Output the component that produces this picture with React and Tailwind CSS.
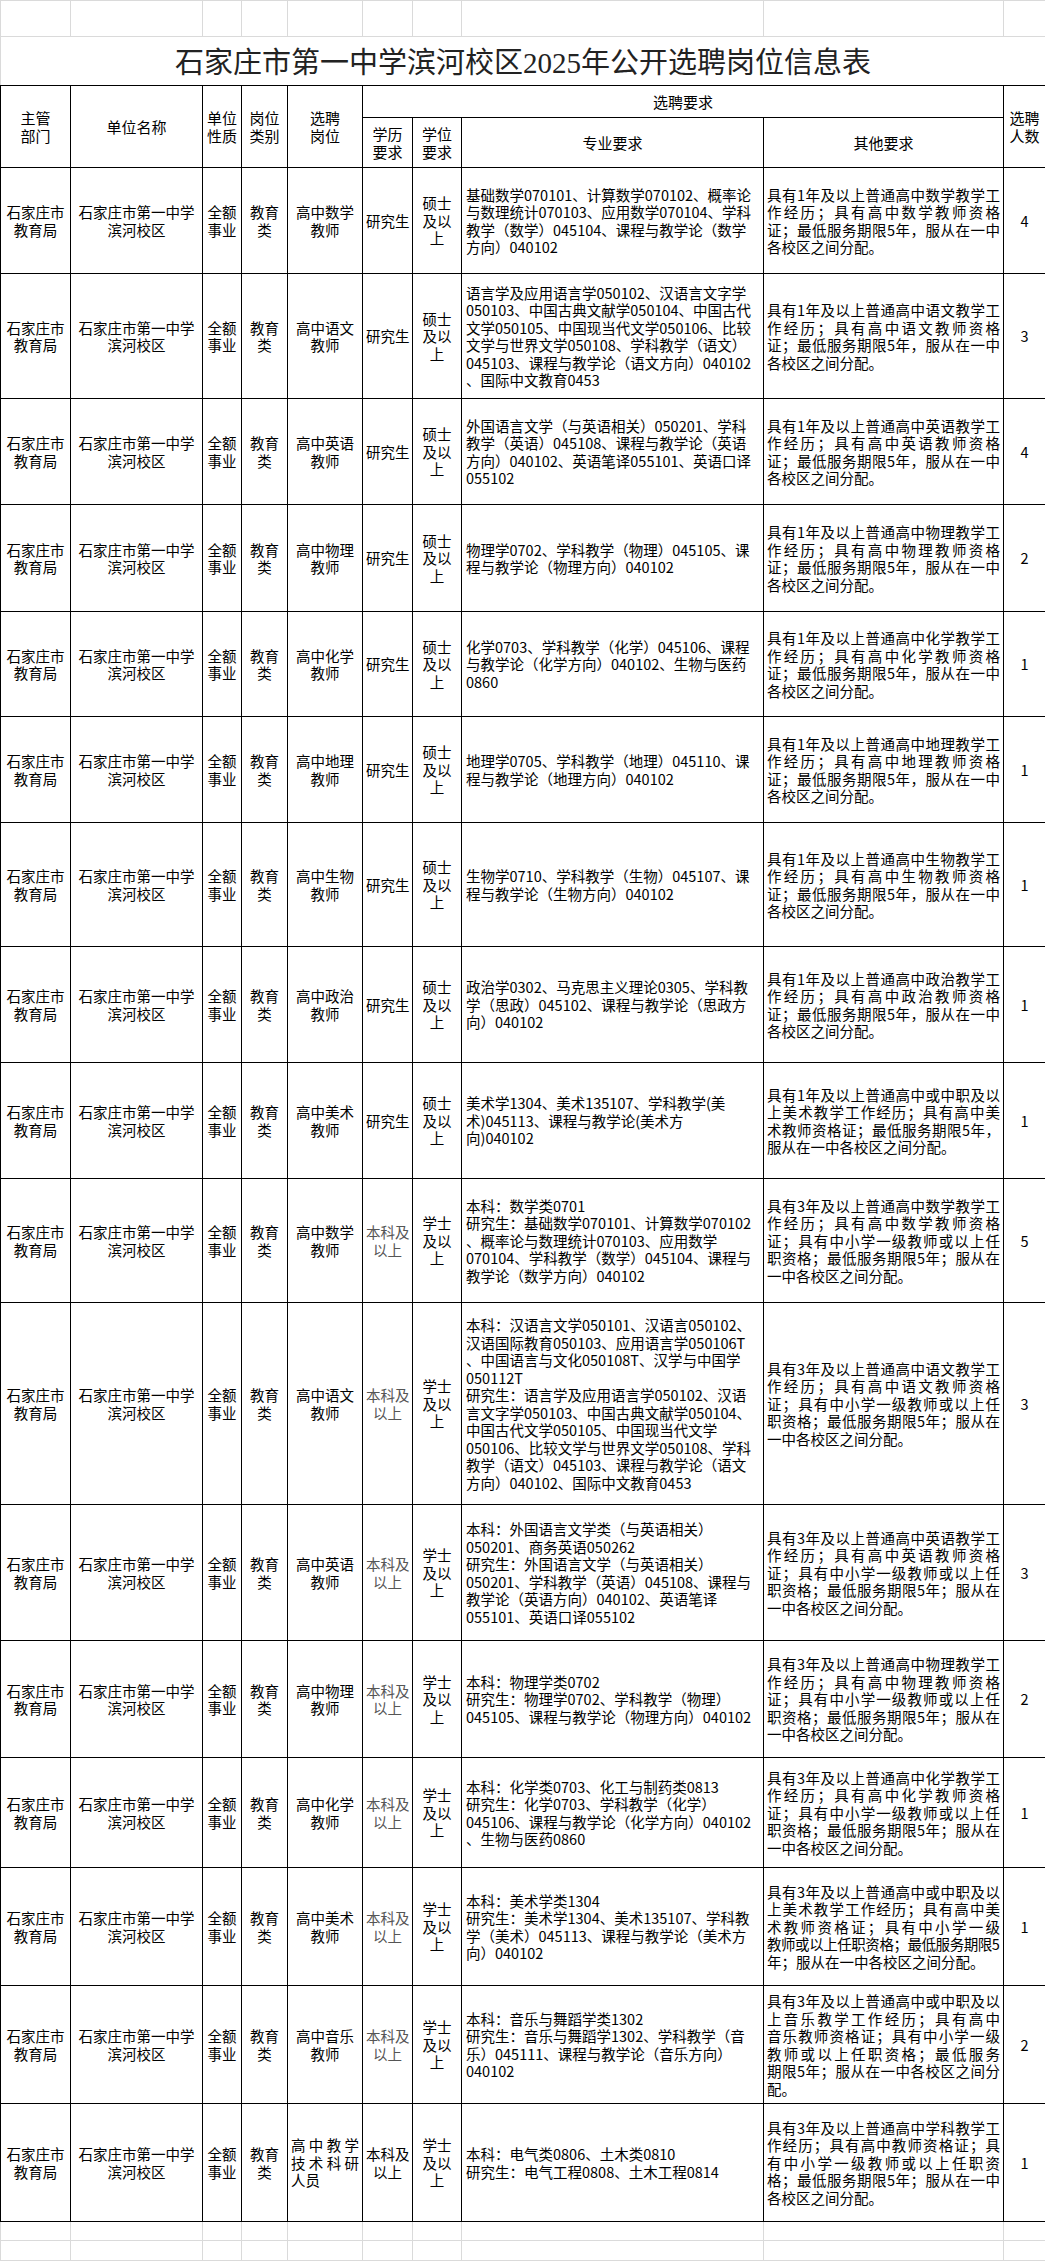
import React from "react";

const rows = [
  {
    h: "h-[106px]",
    post: ["高中数学", "教师"],
    edu: ["研究生"],
    deg: ["硕士", "及以", "上"],
    major: [
      "基础数学070101、计算数学070102、概率论",
      "与数理统计070103、应用数学070104、学科",
      "教学（数学）045104、课程与教学论（数学",
      "方向）040102",
    ],
    other: [
      "具有1年及以上普通高中数学教学工",
      "作经历；具有高中数学教师资格",
      "证；最低服务期限5年，服从在一中",
      "各校区之间分配。",
    ],
    n: "4",
  },
  {
    h: "h-[125px]",
    post: ["高中语文", "教师"],
    edu: ["研究生"],
    deg: ["硕士", "及以", "上"],
    major: [
      "语言学及应用语言学050102、汉语言文字学",
      "050103、中国古典文献学050104、中国古代",
      "文学050105、中国现当代文学050106、比较",
      "文学与世界文学050108、学科教学（语文）",
      "045103、课程与教学论（语文方向）040102",
      "、国际中文教育0453",
    ],
    other: [
      "具有1年及以上普通高中语文教学工",
      "作经历；具有高中语文教师资格",
      "证；最低服务期限5年，服从在一中",
      "各校区之间分配。",
    ],
    n: "3",
  },
  {
    h: "h-[106px]",
    post: ["高中英语", "教师"],
    edu: ["研究生"],
    deg: ["硕士", "及以", "上"],
    major: [
      "外国语言文学（与英语相关）050201、学科",
      "教学（英语）045108、课程与教学论（英语",
      "方向）040102、英语笔译055101、英语口译",
      "055102",
    ],
    other: [
      "具有1年及以上普通高中英语教学工",
      "作经历；具有高中英语教师资格",
      "证；最低服务期限5年，服从在一中",
      "各校区之间分配。",
    ],
    n: "4",
  },
  {
    h: "h-[107px]",
    post: ["高中物理", "教师"],
    edu: ["研究生"],
    deg: ["硕士", "及以", "上"],
    major: ["物理学0702、学科教学（物理）045105、课", "程与教学论（物理方向）040102"],
    other: [
      "具有1年及以上普通高中物理教学工",
      "作经历；具有高中物理教师资格",
      "证；最低服务期限5年，服从在一中",
      "各校区之间分配。",
    ],
    n: "2",
  },
  {
    h: "h-[105px]",
    post: ["高中化学", "教师"],
    edu: ["研究生"],
    deg: ["硕士", "及以", "上"],
    major: [
      "化学0703、学科教学（化学）045106、课程",
      "与教学论（化学方向）040102、生物与医药",
      "0860",
    ],
    other: [
      "具有1年及以上普通高中化学教学工",
      "作经历；具有高中化学教师资格",
      "证；最低服务期限5年，服从在一中",
      "各校区之间分配。",
    ],
    n: "1",
  },
  {
    h: "h-[106px]",
    post: ["高中地理", "教师"],
    edu: ["研究生"],
    deg: ["硕士", "及以", "上"],
    major: ["地理学0705、学科教学（地理）045110、课", "程与教学论（地理方向）040102"],
    other: [
      "具有1年及以上普通高中地理教学工",
      "作经历；具有高中地理教师资格",
      "证；最低服务期限5年，服从在一中",
      "各校区之间分配。",
    ],
    n: "1",
  },
  {
    h: "h-[124px]",
    post: ["高中生物", "教师"],
    edu: ["研究生"],
    deg: ["硕士", "及以", "上"],
    major: ["生物学0710、学科教学（生物）045107、课", "程与教学论（生物方向）040102"],
    other: [
      "具有1年及以上普通高中生物教学工",
      "作经历；具有高中生物教师资格",
      "证；最低服务期限5年，服从在一中",
      "各校区之间分配。",
    ],
    n: "1",
  },
  {
    h: "h-[116px]",
    post: ["高中政治", "教师"],
    edu: ["研究生"],
    deg: ["硕士", "及以", "上"],
    major: [
      "政治学0302、马克思主义理论0305、学科教",
      "学（思政）045102、课程与教学论（思政方",
      "向）040102",
    ],
    other: [
      "具有1年及以上普通高中政治教学工",
      "作经历；具有高中政治教师资格",
      "证；最低服务期限5年，服从在一中",
      "各校区之间分配。",
    ],
    n: "1",
  },
  {
    h: "h-[116px]",
    post: ["高中美术", "教师"],
    edu: ["研究生"],
    deg: ["硕士", "及以", "上"],
    major: ["美术学1304、美术135107、学科教学(美", "术)045113、课程与教学论(美术方", "向)040102"],
    other: [
      "具有1年及以上普通高中或中职及以",
      "上美术教学工作经历；具有高中美",
      "术教师资格证；最低服务期限5年，",
      "服从在一中各校区之间分配。",
    ],
    n: "1",
  },
  {
    h: "h-[124px]",
    post: ["高中数学", "教师"],
    edu: ["本科及", "以上"],
    gray: true,
    deg: ["学士", "及以", "上"],
    major: [
      "本科：数学类0701",
      "研究生：基础数学070101、计算数学070102",
      "、概率论与数理统计070103、应用数学",
      "070104、学科教学（数学）045104、课程与",
      "教学论（数学方向）040102",
    ],
    other: [
      "具有3年及以上普通高中数学教学工",
      "作经历；具有高中数学教师资格",
      "证；具有中小学一级教师或以上任",
      "职资格；最低服务期限5年；服从在",
      "一中各校区之间分配。",
    ],
    n: "5",
  },
  {
    h: "h-[202px]",
    post: ["高中语文", "教师"],
    edu: ["本科及", "以上"],
    gray: true,
    deg: ["学士", "及以", "上"],
    major: [
      "本科：汉语言文学050101、汉语言050102、",
      "汉语国际教育050103、应用语言学050106T",
      "、中国语言与文化050108T、汉学与中国学",
      "050112T",
      "研究生：语言学及应用语言学050102、汉语",
      "言文字学050103、中国古典文献学050104、",
      "中国古代文学050105、中国现当代文学",
      "050106、比较文学与世界文学050108、学科",
      "教学（语文）045103、课程与教学论（语文",
      "方向）040102、国际中文教育0453",
    ],
    other: [
      "具有3年及以上普通高中语文教学工",
      "作经历；具有高中语文教师资格",
      "证；具有中小学一级教师或以上任",
      "职资格；最低服务期限5年；服从在",
      "一中各校区之间分配。",
    ],
    n: "3",
  },
  {
    h: "h-[136px]",
    post: ["高中英语", "教师"],
    edu: ["本科及", "以上"],
    gray: true,
    deg: ["学士", "及以", "上"],
    major: [
      "本科：外国语言文学类（与英语相关）",
      "050201、商务英语050262",
      "研究生：外国语言文学（与英语相关）",
      "050201、学科教学（英语）045108、课程与",
      "教学论（英语方向）040102、英语笔译",
      "055101、英语口译055102",
    ],
    other: [
      "具有3年及以上普通高中英语教学工",
      "作经历；具有高中英语教师资格",
      "证；具有中小学一级教师或以上任",
      "职资格；最低服务期限5年；服从在",
      "一中各校区之间分配。",
    ],
    n: "3",
  },
  {
    h: "h-[117px]",
    post: ["高中物理", "教师"],
    edu: ["本科及", "以上"],
    gray: true,
    deg: ["学士", "及以", "上"],
    major: [
      "本科：物理学类0702",
      "研究生：物理学0702、学科教学（物理）",
      "045105、课程与教学论（物理方向）040102",
    ],
    other: [
      "具有3年及以上普通高中物理教学工",
      "作经历；具有高中物理教师资格",
      "证；具有中小学一级教师或以上任",
      "职资格；最低服务期限5年；服从在",
      "一中各校区之间分配。",
    ],
    n: "2",
  },
  {
    h: "h-[110px]",
    post: ["高中化学", "教师"],
    edu: ["本科及", "以上"],
    gray: true,
    deg: ["学士", "及以", "上"],
    major: [
      "本科：化学类0703、化工与制药类0813",
      "研究生：化学0703、学科教学（化学）",
      "045106、课程与教学论（化学方向）040102",
      "、生物与医药0860",
    ],
    other: [
      "具有3年及以上普通高中化学教学工",
      "作经历；具有高中化学教师资格",
      "证；具有中小学一级教师或以上任",
      "职资格；最低服务期限5年；服从在",
      "一中各校区之间分配。",
    ],
    n: "1",
  },
  {
    h: "h-[118px]",
    post: ["高中美术", "教师"],
    edu: ["本科及", "以上"],
    gray: true,
    deg: ["学士", "及以", "上"],
    major: [
      "本科：美术学类1304",
      "研究生：美术学1304、美术135107、学科教",
      "学（美术）045113、课程与教学论（美术方",
      "向）040102",
    ],
    other: [
      "具有3年及以上普通高中或中职及以",
      "上美术教学工作经历；具有高中美",
      "术教师资格证；具有中小学一级",
      { t: "教师或以上任职资格；最低服务期限5", tight: true },
      "年；服从在一中各校区之间分配。",
    ],
    n: "1",
  },
  {
    h: "h-[118px]",
    post: ["高中音乐", "教师"],
    edu: ["本科及", "以上"],
    gray: true,
    deg: ["学士", "及以", "上"],
    major: [
      "本科：音乐与舞蹈学类1302",
      "研究生：音乐与舞蹈学1302、学科教学（音",
      "乐）045111、课程与教学论（音乐方向）",
      "040102",
    ],
    other: [
      "具有3年及以上普通高中或中职及以",
      "上音乐教学工作经历；具有高中",
      "音乐教师资格证；具有中小学一级",
      "教师或以上任职资格；最低服务",
      "期限5年；服从在一中各校区之间分",
      "配。",
    ],
    n: "2",
  },
  {
    h: "h-[118px]",
    post: ["高中教学", "技术科研", "人员"],
    postJustify: true,
    edu: ["本科及", "以上"],
    deg: ["学士", "及以", "上"],
    major: ["本科：电气类0806、土木类0810", "研究生：电气工程0808、土木工程0814"],
    other: [
      "具有3年及以上普通高中学科教学工",
      "作经历；具有高中教师资格证；具",
      "有中小学一级教师或以上任职资",
      "格；最低服务期限5年；服从在一中",
      "各校区之间分配。",
    ],
    n: "1",
  },
];

function Lines({ lines, justify }) {
  return lines.map((l, i) => {
    const last = i === lines.length - 1;
    const text = typeof l === "string" ? l : l.t;
    const tight = typeof l === "object" && l.tight;
    let cls = "whitespace-nowrap";
    if (justify && !last) cls = "whitespace-nowrap text-justify [text-align-last:justify]";
    if (tight) cls = "whitespace-nowrap tracking-[-0.45px]";
    return (
      <div key={i} className={cls}>
        {text}
      </div>
    );
  });
}

const cell = "border border-black px-[3px] py-0 align-middle text-[14.5px] leading-[17.5px]";
const hcell = "border border-black px-[2px] py-0 align-middle text-center text-[15px] leading-[18px]";
const gcell = "border border-[#dadada] p-0";

function GrayRow({ h }) {
  return (
    <tr className={h}>
      <td className={gcell}></td>
      <td className={gcell}></td>
      <td className={gcell}></td>
      <td className={gcell}></td>
      <td className={gcell}></td>
      <td className={gcell}></td>
      <td className={gcell}></td>
      <td className={gcell}></td>
      <td className={gcell}></td>
      <td className={gcell}></td>
    </tr>
  );
}

export default function App() {
  return (
    <div className="w-[1045px] bg-white text-black font-['Noto_Sans_CJK_SC',sans-serif]">
      <table className="w-[1045px] table-fixed border-collapse">
        <colgroup>
          <col className="w-[70px]" />
          <col className="w-[132px]" />
          <col className="w-[39px]" />
          <col className="w-[46px]" />
          <col className="w-[75px]" />
          <col className="w-[50px]" />
          <col className="w-[49px]" />
          <col className="w-[302px]" />
          <col className="w-[240px]" />
          <col className="w-[42px]" />
        </colgroup>
        <tbody>
          <GrayRow h="h-[36px]" />
          <tr className="h-[49px]">
            <td
              colSpan={10}
              className="border-x border-t border-[#dadada] border-b border-b-black pt-[5px] pb-0 text-center align-middle text-[29px] leading-none text-[#222] font-['Liberation_Serif','Noto_Sans_CJK_SC',serif]"
            >
              石家庄市第一中学滨河校区2025年公开选聘岗位信息表
            </td>
          </tr>
          <tr className="h-[32px]">
            <td rowSpan={2} className={hcell}>
              <div>主管</div>
              <div>部门</div>
            </td>
            <td rowSpan={2} className={hcell}>
              单位名称
            </td>
            <td rowSpan={2} className={hcell}>
              <div>单位</div>
              <div>性质</div>
            </td>
            <td rowSpan={2} className={hcell}>
              <div>岗位</div>
              <div>类别</div>
            </td>
            <td rowSpan={2} className={hcell}>
              <div>选聘</div>
              <div>岗位</div>
            </td>
            <td colSpan={4} className={hcell}>
              选聘要求
            </td>
            <td rowSpan={2} className={hcell}>
              <div>选聘</div>
              <div>人数</div>
            </td>
          </tr>
          <tr className="h-[50px]">
            <td className={hcell}>
              <div>学历</div>
              <div>要求</div>
            </td>
            <td className={hcell}>
              <div>学位</div>
              <div>要求</div>
            </td>
            <td className={hcell}>专业要求</td>
            <td className={hcell}>其他要求</td>
          </tr>
          {rows.map((r, idx) => (
            <tr key={idx} className={r.h}>
              <td className={cell + " text-center"}>
                <div>石家庄市</div>
                <div>教育局</div>
              </td>
              <td className={cell + " text-center"}>
                <div>石家庄市第一中学</div>
                <div>滨河校区</div>
              </td>
              <td className={cell + " text-center"}>
                <div>全额</div>
                <div>事业</div>
              </td>
              <td className={cell + " text-center"}>
                <div>教育</div>
                <div>类</div>
              </td>
              <td className={r.postJustify ? cell + " text-left" : cell + " text-center"}>
                <Lines lines={r.post} justify={!!r.postJustify} />
              </td>
              <td className={r.gray ? cell + " text-center text-[#555]" : cell + " text-center"}>
                <Lines lines={r.edu} />
              </td>
              <td className={cell + " text-center"}>
                <Lines lines={r.deg} />
              </td>
              <td className={cell + " text-left pl-[4px]"}>
                <Lines lines={r.major} />
              </td>
              <td className={cell + " text-left"}>
                <Lines lines={r.other} justify />
              </td>
              <td className={cell + " text-center"}>{r.n}</td>
            </tr>
          ))}
          <GrayRow h="h-[19px]" />
          <GrayRow h="h-[20px]" />
        </tbody>
      </table>
    </div>
  );
}
